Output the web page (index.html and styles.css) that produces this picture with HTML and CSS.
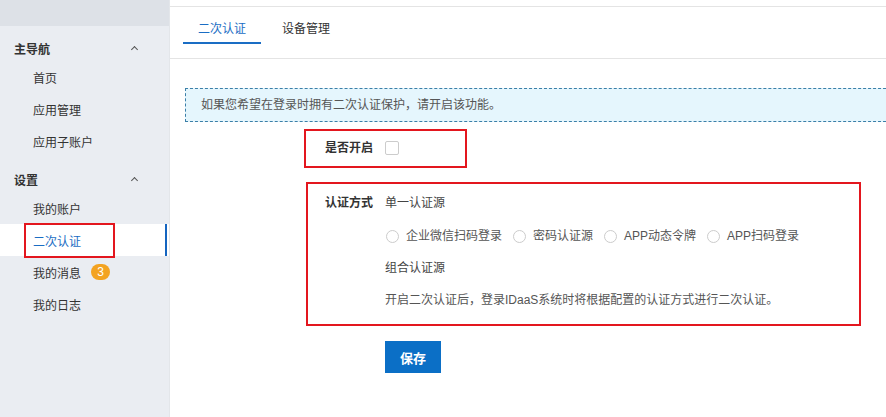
FILE: index.html
```html
<!DOCTYPE html>
<html lang="zh-CN">
<head>
  <meta charset="UTF-8" />
  <meta name="viewport" content="width=device-width, initial-scale=1.0"/>
  <title>二次认证</title>
  <link rel="stylesheet" href="styles.css">
</head>
<body>
  <div class="layout">
    <aside class="sidebar">
      <div class="sidebar-top"></div>
      <div class="nav-group">
        <div class="nav-title">主导航 <span class="caret"></span></div>
        <a class="nav-item">首页</a>
        <a class="nav-item">应用管理</a>
        <a class="nav-item">应用子账户</a>
      </div>
      <div class="nav-group">
        <div class="nav-title">设置 <span class="caret"></span></div>
        <a class="nav-item">我的账户</a>
        <a class="nav-item active"><span class="mark">二次认证</span></a>
        <a class="nav-item">我的消息 <span class="badge">3</span></a>
        <a class="nav-item">我的日志</a>
      </div>
    </aside>

    <main class="main">
      <div class="top-strip"></div>
      <div class="tabs">
        <div class="tab active">二次认证</div>
        <div class="tab">设备管理</div>
      </div>

      <div class="content">
        <div class="notice">如果您希望在登录时拥有二次认证保护，请开启该功能。</div>

        <form class="form">
          <div class="form-row row-enable">
            <label class="form-label">是否开启</label>
            <div class="form-control">
              <span class="checkbox"></span>
            </div>
          </div>

          <div class="form-row row-method">
            <label class="form-label">认证方式</label>
            <div class="form-control">
              <div class="line">单一认证源</div>
              <div class="line radios">
                <span class="radio-item"><span class="radio"></span>企业微信扫码登录</span>
                <span class="radio-item"><span class="radio"></span>密码认证源</span>
                <span class="radio-item"><span class="radio"></span>APP动态令牌</span>
                <span class="radio-item"><span class="radio"></span>APP扫码登录</span>
              </div>
              <div class="line combo">组合认证源</div>
              <div class="line desc">开启二次认证后，登录IDaaS系统时将根据配置的认证方式进行二次认证。</div>
            </div>
          </div>

          <div class="form-actions">
            <button type="button" class="btn-primary">保存</button>
          </div>

          <div class="annot annot-enable"></div>
          <div class="annot annot-method"></div>
        </form>
      </div>
    </main>
  </div>
</body>
</html>
```

FILE: styles.css
```css
body {
  margin: 0;
  padding: 0;
  font-family: "Liberation Sans", "Noto Sans CJK SC", sans-serif;
  font-size: 12px;
  color: #333;
  background: #fff;
  overflow: hidden;
}

.layout {
  display: flex;
  height: 417px;
}

/* sidebar */
.sidebar {
  width: 170px;
  flex-shrink: 0;
  background: #eaedf2;
  border-right: 1px solid #e3e6ea;
  box-sizing: border-box;
}

.sidebar-top {
  height: 26px;
  background: #dde1e7;
}

.nav-group {
  padding-top: 9px;
}

.nav-title {
  display: flex;
  align-items: center;
  justify-content: space-between;
  height: 26px;
  padding: 0 32px 0 14px;
  font-weight: bold;
  color: #333;
}

.caret {
  width: 4px;
  height: 4px;
  border-top: 1px solid #555;
  border-left: 1px solid #555;
  transform: rotate(45deg);
  margin-top: 3px;
}

.nav-item {
  display: flex;
  align-items: center;
  height: 32px;
  padding-left: 33px;
  color: #333;
  position: relative;
}

.nav-item.active {
  background: #fff;
  color: #1a6dc4;
}

.nav-item.active::after {
  content: "";
  position: absolute;
  right: 2px;
  top: 0;
  bottom: 0;
  width: 2px;
  background: #1565c0;
}

.mark {
  position: relative;
}

.mark::before {
  content: "";
  position: absolute;
  left: -9px;
  right: -34px;
  top: -9px;
  bottom: -9px;
  border: 2px solid #e3161e;
}

.badge {
  display: inline-block;
  margin-left: 10px;
  width: 19px;
  height: 16px;
  line-height: 16px;
  border-radius: 8px;
  background: #f3a321;
  color: #fff;
  text-align: center;
  font-size: 12px;
}

/* main */
.main {
  flex: 1;
  overflow: hidden;
}

.top-strip {
  height: 6px;
  border-bottom: 1px solid #e4e4e4;
}

.tabs {
  display: flex;
  height: 51px;
  padding-left: 13px;
  border-bottom: 1px solid #e4e4e4;
}

.tab {
  padding: 0 15px;
  margin-right: 6px;
  line-height: 44px;
  color: #333;
}

.tab.active {
  color: #1a6dc4;
  position: relative;
}

.tab.active::after {
  content: "";
  position: absolute;
  left: 0;
  right: 0;
  top: 35px;
  height: 2px;
  background: #1a6dc4;
}

.content {
  padding: 29px 0 0 15px;
}

.notice {
  height: 32px;
  line-height: 32px;
  margin-right: -10px;
  padding-left: 15px;
  border: 1px dashed #3b7fa8;
  background: #e5f6fd;
  color: #555;
}

.form {
  position: relative;
  padding-top: 10px;
}

.form-row {
  display: flex;
}

.form-label {
  width: 188px;
  flex-shrink: 0;
  text-align: right;
  font-weight: bold;
  line-height: 32px;
  color: #333;
}

.form-control {
  margin-left: 12px;
}

.row-enable .form-control {
  display: flex;
  align-items: center;
  height: 32px;
}

.checkbox {
  display: block;
  width: 12px;
  height: 12px;
  border: 1px solid #ccc;
  border-radius: 2px;
  background: #fff;
  margin-top: -1px;
}

.row-method {
  margin-top: 23px;
}

.line {
  line-height: 32px;
  color: #444;
}

.radios {
  display: flex;
  align-items: center;
  height: 34px;
  color: #555;
}

.radio-item {
  display: flex;
  align-items: center;
  margin-right: 10px;
}

.radio {
  width: 11px;
  height: 11px;
  border: 1px solid #ccc;
  border-radius: 50%;
  margin: 0 7px 0 1px;
}

.combo {
  line-height: 30px;
}

.desc {
  line-height: 34px;
  color: #555;
}

.form-actions {
  padding: 24px 0 0 200px;
}

.btn-primary {
  width: 56px;
  height: 32px;
  border: none;
  background: #0b6fc6;
  color: #fff;
  font-family: inherit;
  font-size: 13px;
  font-weight: bold;
  cursor: pointer;
}

/* red annotation boxes drawn over the form */
.annot {
  position: absolute;
  border: 2px solid #e3161e;
  box-sizing: border-box;
}

.annot-enable {
  left: 119px;
  top: 7px;
  width: 163px;
  height: 39px;
}

.annot-method {
  left: 121px;
  top: 60px;
  width: 555px;
  height: 144px;
}
```
